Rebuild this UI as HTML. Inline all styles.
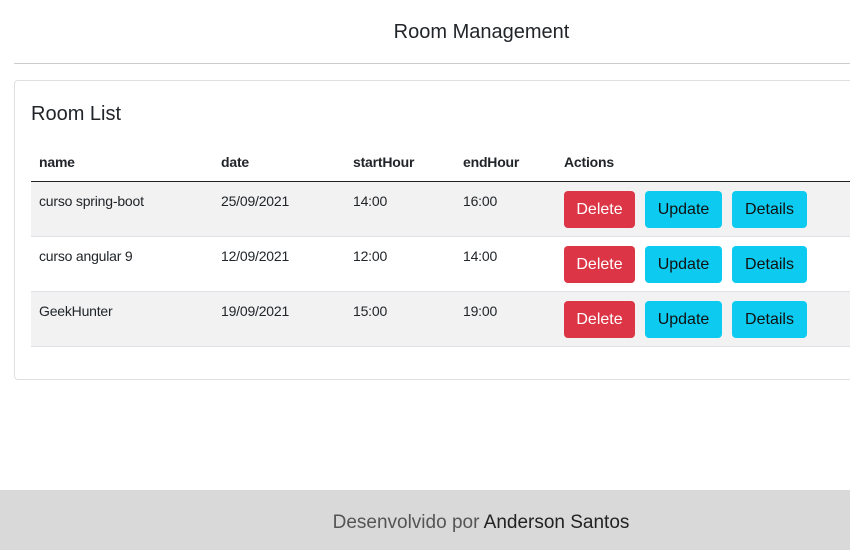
<!DOCTYPE html>
<html><head><meta charset="utf-8"><style>
*{box-sizing:border-box;margin:0;padding:0}
body{width:850px;height:550px;overflow:hidden;background:#fff;font-family:"Liberation Sans",sans-serif;color:#212529;position:relative}
.hdr{position:absolute;left:14px;right:0;top:0;height:64px;border-bottom:1px solid #ccc}
.hdr h1{position:absolute;left:0;width:935px;top:21px;text-align:center;font-size:20px;font-weight:normal}
.card{position:absolute;left:14px;top:80px;width:860px;height:300px;border:1px solid #dfdfdf;border-radius:4px}
.card h2{position:absolute;left:16px;top:22px;font-size:20px;font-weight:normal}
.th,.row{position:absolute;left:31px;width:830px}
.th{top:150px;height:32px;border-bottom:1px solid #222;font-weight:bold;font-size:14px;letter-spacing:-0.2px}
.row{height:55px;border-bottom:1px solid #dee2e6;font-size:14px;letter-spacing:-0.2px}
.c{position:absolute;top:11px}
.th .c{top:4px}
.b{position:absolute;top:9px;height:37px;border-radius:4px;font-size:16px;text-align:center;line-height:37px;letter-spacing:0}
.d{left:533px;width:71px;background:#dc3545;color:#fff}
.u{left:614px;width:77px;background:#0dcaf0;color:#111}
.t{left:701px;width:75px;background:#0dcaf0;color:#111}
.ft{position:absolute;left:0;top:490px;width:850px;height:60px;background:#d9d9d9;text-align:center;line-height:66px;font-size:19px;color:#555;padding-left:112px}
.ft b{font-weight:normal;color:#222}
</style></head><body>
<div class="hdr"><h1>Room Management</h1></div>
<div class="card"><h2>Room List</h2></div>
<div class="th"><span class="c" style="left:8px">name</span><span class="c" style="left:190px">date</span><span class="c" style="left:322px">startHour</span><span class="c" style="left:432px">endHour</span><span class="c" style="left:533px">Actions</span></div>
<div class="row" style="top:182px;background:#f2f2f2"><span class="c" style="left:8px">curso spring-boot</span><span class="c" style="left:190px">25/09/2021</span><span class="c" style="left:322px">14:00</span><span class="c" style="left:432px">16:00</span><span class="b d">Delete</span><span class="b u">Update</span><span class="b t">Details</span></div>
<div class="row" style="top:237px"><span class="c" style="left:8px">curso angular 9</span><span class="c" style="left:190px">12/09/2021</span><span class="c" style="left:322px">12:00</span><span class="c" style="left:432px">14:00</span><span class="b d">Delete</span><span class="b u">Update</span><span class="b t">Details</span></div>
<div class="row" style="top:292px;background:#f2f2f2"><span class="c" style="left:8px">GeekHunter</span><span class="c" style="left:190px">19/09/2021</span><span class="c" style="left:322px">15:00</span><span class="c" style="left:432px">19:00</span><span class="b d">Delete</span><span class="b u">Update</span><span class="b t">Details</span></div>
<div class="ft">Desenvolvido por <b>Anderson Santos</b></div>
</body></html>
